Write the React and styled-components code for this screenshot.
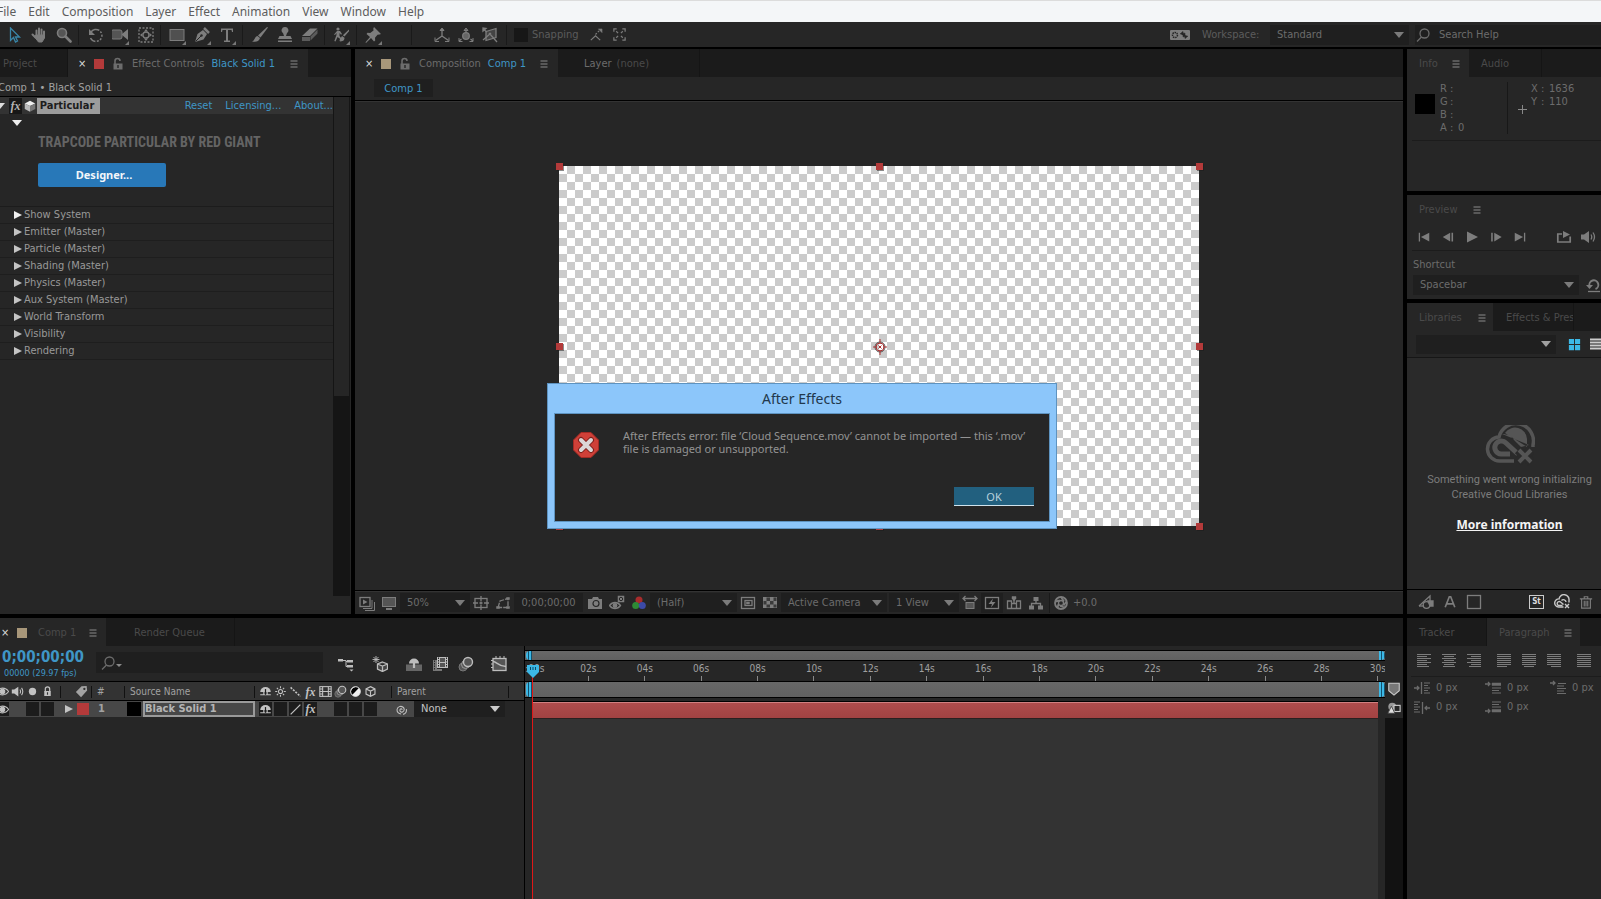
import React, { useState } from "react";
import styled, { createGlobalStyle, css } from "styled-components";

const c = {
  panel: "#262626",
  dark: "#1b1b1b",
  field: "#1f1f1f",
  text: "#6c6c6c",
  dim: "#4a4a4a",
  light: "#a2a2a2",
  blue: "#3f96c6",
  cyan: "#3cb8e6",
  red: "#b33a3a",
  sand: "#a8977a",
};

const GlobalStyle = createGlobalStyle`
  * {
    box-sizing: border-box;
  }
  body {
    margin: 0;
    background: #000;
    color: ${c.text};
    font: 11px/14px "DejaVu Sans Condensed", "Noto Sans", sans-serif;
  }
  button, input, select {
    font: inherit;
    color: inherit;
    margin: 0;
    padding: 0;
    border: 0;
    outline: none;
    background: none;
    min-width: 0;
  }
  h1, h2, p {
    margin: 0;
    font: inherit;
  }
`;

/* ---------- icons ---------- */

const stroke = { fill: "none", stroke: "currentColor", strokeWidth: 1.3 };

const lines = (rows) =>
  rows.map(([x, w], i) => (
    <rect key={i} x={x} y={1 + i * 2} width={w} height="1" fill="currentColor" />
  ));

const icons = {
  arrow: <path d="M4.500 1v12.500l3-3 2 4.500 2-1-2-4H13.500z" {...stroke} />,
  hand: (
    <g stroke="currentColor" strokeWidth="2" strokeLinecap="round">
      <path d="M5.500 9V3.500M8 8V1.500M10.500 8V2.500M13 9V4.500M1.500 7.500l3 3" />
      <path d="M5 8h8.500v3L11 15H7.500L4 10.500z" fill="currentColor" strokeWidth="1" />
    </g>
  ),
  zoom: (
    <g>
      <circle cx="6" cy="6" r="4.500" fill="#555" stroke="currentColor" strokeWidth="1.600" />
      <path d="M9.500 9.500l5 5" stroke="currentColor" strokeWidth="2.600" strokeLinecap="round" />
    </g>
  ),
  rotate: (
    <g>
      <path d="M3 5a6 6 0 1 1-.5 6" {...stroke} strokeDasharray="9 1.500 2 1.500 2 1.500 2 1.500 2 1.500" strokeWidth="1.500" />
      <path d="M1 2v6h6z" fill="currentColor" />
    </g>
  ),
  camera: (
    <g>
      <rect x="-1" y="3" width="11" height="9" rx="2" fill="#555" stroke="currentColor" />
      <path d="M10 7l6-5v11l-6-5z" fill="currentColor" />
    </g>
  ),
  pan: (
    <g>
      <rect x="1" y="1" width="14" height="14" {...stroke} strokeDasharray="2 1.500" />
      <circle cx="8" cy="8" r="3" {...stroke} />
      <path d="M8 2l2 2.500H6zM8 14l2-2.500H6zM2 8l2.500-2v4zM14 8l-2.500-2v4z" fill="currentColor" />
    </g>
  ),
  rect: <rect x="1" y="2.500" width="14" height="11" fill="#505050" stroke="currentColor" />,
  pen: (
    <g>
      <path d="M1 15l2.500-8L9 3l4 4-3.500 5.500z" fill="currentColor" />
      <path d="M10 1l5 5" stroke="currentColor" strokeWidth="2.500" />
      <path d="M1.500 14.500L7 9" stroke="#262626" />
      <circle cx="7.500" cy="8.500" r="1.200" fill="#262626" />
    </g>
  ),
  type: <path d="M2 1.500h12v3.500h-1L12.500 3H9v10.500h2V15H5v-1.500h2V3H3.500L3 5H2z" fill="currentColor" />,
  brush: (
    <g fill="currentColor">
      <path d="M16 .5L8.500 10.500 6 8.500 15 0z" />
      <path d="M5.500 9L8 11c-1 4-4.500 4-8 3.500C3 13.500 2.500 9.500 5.500 9z" />
    </g>
  ),
  stamp: (
    <g fill="currentColor">
      <path d="M8 0a3.300 3.300 0 0 0-2 6l1 3H2.500L1 12h14l-1.500-3H9l1-3a3.300 3.300 0 0 0-2-6z" />
      <rect x="1" y="13.500" width="14" height="1.500" />
    </g>
  ),
  eraser: (
    <g>
      <path d="M0 9L8 1.500h7.500L8 9z" fill="currentColor" />
      <path d="M0 10h8v4H0zM8.500 9.500l7-7V6.500l-7 7z" fill="#5b5b5b" />
    </g>
  ),
  roto: (
    <g fill="currentColor">
      <circle cx="5" cy="2" r="1.600" />
      <path d="M4 4h3l2 3-1 .8L6.500 6v3l2 2.500-1 3-1-.4.500-2.400L4.500 10l-2 4.500-1.200-.5L3.500 8V6L2 8l-1-.6z" />
      <path d="M17 3l-5.500 6.500-1.700-1.200L16 2.500zM9 9l2.500 1.700c0 3-2 3.500-4.500 3.500 1-1 .5-4 2-5.200z" />
    </g>
  ),
  pin: (
    <path d="M9 0l7 7-1.500.5-2 .3-2.500 3 .2 2.700-1.200 1-3-3.500L1 16l-.5-.8L5 10 1.500 7l1-1.200 2.700.2L8.500 3.500 8.300 1.500z" fill="currentColor" />
  ),
  axis: (
    <g {...stroke}>
      <path d="M8 9V2M8 9l-6.500 4.500M8 9l6.500 4.500" />
      <path d="M6 3.500L8 1l2 2.500z" fill="currentColor" strokeWidth="1" />
      <path d="M1 10.500V14.500h4M15 10.500v4h-4" strokeWidth="1" />
    </g>
  ),
  world: (
    <g {...stroke}>
      <path d="M8 6V2M3.500 12L1 14M12.500 12l2.500 2" />
      <circle cx="8" cy="9" r="3.300" fill="#666" />
      <path d="M6 3.500L8 1l2 2.500zM1 11V14.500h3.500M15 11v3.500h-3.500" strokeWidth="1" />
    </g>
  ),
  view: (
    <g {...stroke}>
      <path d="M4 4.500l10-3v9l-10 3z" fill="#444" />
      <path d="M1 2l4 3M7 6l8 9M1 13l8-7" />
      <path d="M1 1v3l3-2.500z" fill="currentColor" />
    </g>
  ),
  snapEdge: (
    <g {...stroke}>
      <path d="M3 14l5-4.500 5 4.500" />
      <path d="M8 8l5-5" strokeDasharray="2 1.500" />
      <path d="M11 2h4v4z" fill="currentColor" strokeWidth=".500" />
    </g>
  ),
  snapBox: (
    <g {...stroke}>
      <path d="M2 5V2h3M11 2h3v3M14 11v3h-3M5 14H2v-3" />
      <path d="M4.500 4.500l2 2M11.500 4.500l-2 2M4.500 11.500l2-2M11.500 11.500l-2-2" />
    </g>
  ),
  workspace: (
    <g>
      <rect x="0" y="3" width="20" height="10" rx="1" fill="currentColor" />
      <circle cx="5" cy="8" r="2.500" fill="none" stroke="#262626" strokeWidth="1.500" strokeDasharray="1.500 .7" />
      <path d="M10 7l3-2.500V6.200h2V9M18 9l-3 2.500V9.800h-2V7.500" fill="#262626" stroke="#262626" strokeWidth=".600" />
    </g>
  ),
  search: (
    <g {...stroke}>
      <circle cx="9.500" cy="6.500" r="4.500" />
      <path d="M6.500 10L2 14.500" />
    </g>
  ),
  lock: (
    <g>
      <path d="M5 8V5a2.500 2.500 0 0 1 5 0" {...stroke} strokeWidth="1.600" />
      <path d="M3.500 7.500h9v6h-9zM7.300 9v3h1.400V9z" fill="currentColor" fillRule="evenodd" />
    </g>
  ),
  closedLock: (
    <g>
      <path d="M5.300 8V5a2.700 2.700 0 0 1 5.400 0v3" {...stroke} strokeWidth="1.500" />
      <path d="M4 7.500h8v6H4zM7.300 9v3h1.400V9z" fill="currentColor" fillRule="evenodd" />
    </g>
  ),
  menu: <path d="M4 4.500h8M4 8h8M4 11.500h8" {...stroke} strokeWidth="1.200" />,
  cube: (
    <g>
      <path d="M8 2l6 3-6 3-6-3z" fill="#eee" />
      <path d="M2 5l6 3v6.500L2 11.500z" fill="#bbb" />
      <path d="M14 5L8 8v6.500l6-3z" fill="#777" />
    </g>
  ),
  cubeLine: (
    <path d="M8 2l5.500 2.800v6.400L8 14 2.500 11.200V4.800zM2.500 4.800L8 7.500l5.500-2.700M8 7.500V14" {...stroke} strokeWidth="1.400" />
  ),
  playStack: (
    <g {...stroke}>
      <path d="M4 13.500h9V5M6 15.500h9.500V7" strokeWidth="1" />
      <rect x="1" y="2.500" width="10" height="9" />
      <path d="M4 4.500v5L8.500 7z" fill="currentColor" stroke="none" />
    </g>
  ),
  monitor: (
    <g>
      <rect x="1.500" y="2.500" width="13" height="9" fill="#555" stroke="currentColor" />
      <path d="M5 14h6" stroke="currentColor" strokeWidth="2" />
    </g>
  ),
  grid: (
    <g {...stroke}>
      <rect x="2" y="3.500" width="12" height="9" />
      <path d="M8 1v5M8 10v5M0 8h5M11 8h5M6.500 8h3M8 6.500v3" />
    </g>
  ),
  mask: (
    <g {...stroke}>
      <path d="M3 12.500L5 6l8-2.500v9z" strokeDasharray="5 1" />
      <path d="M1.500 11.500h3v2h-3zM11.500 2.500h3v2h-3zM11.500 11.500h3v2h-3z" fill="currentColor" strokeWidth=".500" />
    </g>
  ),
  snapshot: (
    <g>
      <path d="M1 4h4l1-2h5l1 2h3v10H1z" fill="currentColor" />
      <circle cx="9" cy="8.500" r="3" fill="none" stroke="#262626" strokeWidth="1.200" />
    </g>
  ),
  showSnap: (
    <g {...stroke}>
      <path d="M.500 10.500c3-4 8-4 11 0-3 4-8 4-11 0z" />
      <circle cx="6" cy="10.500" r="1.800" fill="currentColor" />
      <rect x="9" y="1" width="6" height="6" fill="currentColor" strokeWidth=".500" />
      <circle cx="12" cy="4" r="1.700" stroke="#262626" strokeWidth="1" />
    </g>
  ),
  rgb: (
    <g>
      <circle cx="8" cy="5" r="3.500" fill="#a82c2c" />
      <circle cx="4.700" cy="10.500" r="3.500" fill="#2e8a35" />
      <circle cx="11.300" cy="10.500" r="3.500" fill="#3c4aa8" />
    </g>
  ),
  roi: (
    <g {...stroke}>
      <rect x="1.500" y="2.500" width="13" height="11" />
      <rect x="5" y="5.500" width="7" height="5" />
      <rect x="6.500" y="7" width="3" height="2" fill="currentColor" strokeWidth=".500" />
    </g>
  ),
  checker: (
    <g>
      <rect x="1" y="2" width="14" height="11" fill="currentColor" />
      <path d="M4.500 2.500h3.500v3.500H4.500zM11.500 2.500H14.500V6h-3zM1.500 6h3v3.500h-3zM8 6h3.500v3.500H8zM4.500 9.500H8v3H4.500zM11.500 9.500h3v3h-3z" fill="#3a3a3a" />
    </g>
  ),
  pixelAspect: (
    <g>
      <path d="M1 3.500h14M3.500 1L1 3.500 3.500 6M12.500 1L15 3.500 12.500 6" {...stroke} />
      <rect x="4" y="7.500" width="8" height="6" fill="#555" stroke="currentColor" />
    </g>
  ),
  fast: (
    <g>
      <rect x="1.500" y="2.500" width="13" height="11" {...stroke} />
      <path d="M9 3.500L4.500 9H8l-1 3.500L11.500 7H8z" fill="currentColor" />
    </g>
  ),
  timelineBtn: (
    <g {...stroke}>
      <path d="M1.500 6h4v7.500h-4zM10.500 6h4v7.500h-4zM5.500 8.500h5v5h-5zM8 8V3" />
      <path d="M6 1.500h4v2L8 6 6 3.500z" fill="currentColor" strokeWidth=".500" />
    </g>
  ),
  flow: (
    <g>
      <path d="M5.500 2h5v4h-5zM1 10.500h5v4H1zM10 10.500h5v4h-5z" fill="currentColor" />
      <path d="M8 6v2.500M3.500 11V8.500h9V11" {...stroke} />
    </g>
  ),
  exposure: (
    <g {...stroke}>
      <circle cx="8" cy="8" r="6" strokeWidth="1.800" />
      <circle cx="8" cy="8" r="2.500" fill="#262626" />
      <path d="M8 2l3 4.500M13.500 6.500l-3 4M12 12.500L7 11M4.500 13L5.500 9M2.500 6.500L7 5.500" strokeWidth="1.800" />
    </g>
  ),
  first: <path d="M2 3h1.500v10H2zM14 3v10L4.500 8z" fill="currentColor" />,
  stepBack: <path d="M12 3h1.800v10H12zM10.500 3v10L2 8z" fill="currentColor" />,
  play: <path d="M3 2.500v11L14 8z" fill="currentColor" />,
  stepFwd: <path d="M2.500 3h1.800v10H2.500zM6 3v10l8.500-5z" fill="currentColor" />,
  last: <path d="M12.500 3H14v10h-1.500zM2 3v10l9.500-5z" fill="currentColor" />,
  loop: (
    <g>
      <path d="M6 5H1.800v8h12.400V7.500" {...stroke} strokeWidth="1.700" />
      <path d="M7 2v7l7-3.500z" fill="currentColor" />
    </g>
  ),
  speaker: (
    <g>
      <path d="M1 5.500h3L9 2v12l-5-3.500H1z" fill="currentColor" />
      <path d="M11 5.500q1.500 2.500 0 5M13 3.500q3 4.500 0 9" {...stroke} />
    </g>
  ),
  reset: (
    <g>
      <path d="M4.500 9a4.500 4.500 0 1 1 6 3" {...stroke} strokeWidth="1.900" />
      <path d="M1 8h7l-3.500 4z" fill="currentColor" />
      <path d="M3 14.500h12" {...stroke} />
    </g>
  ),
  tiles: <path d="M2 2h5.500v5.500H2zM8.500 2H14v5.500H8.500zM2 8.500h5.500V14H2zM8.500 8.500H14V14H8.500z" fill="currentColor" />,
  list: <path d="M2 3.500h14M2 6.500h14M2 9.500h14M2 12.500h14" stroke="currentColor" strokeWidth="2" />,
  shapes: (
    <g {...stroke}>
      <path d="M1 12L12 2v6" />
      <path d="M1 12h5" />
      <circle cx="8.500" cy="11" r="3.300" />
      <path d="M10 7h5v5h-3z" fill="currentColor" />
    </g>
  ),
  letterA: <path d="M2.500 14L7.200 2h1.600l4.700 12M4 10.200h8" {...stroke} strokeWidth="1.900" />,
  square: <rect x="1.500" y="1.500" width="13" height="13" {...stroke} />,
  trash: (
    <path d="M1 4.500h14M6 4V2h4v2M3 5v10h10V5M6 6.500V13M8 6.500V13M10 6.500V13" {...stroke} />
  ),
  flowchart: (
    <g fill="currentColor">
      <path d="M0 3h5v2.500H0zM9 4h6v2.500H9zM9 9h6v2.500H9z" />
      <path d="M5 4.500h3v6h2M8 5.500h2" fill="none" stroke="currentColor" />
      <path d="M11.500 13.500h4l-2 2z" />
    </g>
  ),
  draft3d: (
    <g {...stroke}>
      <path d="M10.500 6l5 2v5l-5 2.500-5-2.500V8zM5.500 8l5 2 5-2M10.500 10v5.500" fill="#444" />
      <path d="M4 0v7M.500 3.500h7M1.500 1l5 5M6.500 1l-5 5" strokeWidth=".900" />
    </g>
  ),
  shyBig: (
    <g>
      <path d="M0 8.500h16V15H0z" fill="#666" />
      <path d="M3 7.500a5 5 0 0 1 10 0z" fill="currentColor" />
      <path d="M8 4v8" stroke="currentColor" strokeWidth="2.200" />
    </g>
  ),
  filmBig: (
    <g>
      <path d="M1 4h9v11H1z" fill="#777" />
      <path d="M5 1h11v11H5z" fill="currentColor" />
      <path d="M8 2h5v4H8zM8 7h5v4H8z" fill="#555" />
      <path d="M6.500 1.500v10M14.500 1.500v10M2.500 4.500v10" stroke="#262626" strokeDasharray="1.500 1" />
      <path d="M5 12.500h6" stroke="#262626" />
    </g>
  ),
  film: (
    <g {...stroke}>
      <rect x="1" y="2" width="14" height="12" />
      <path d="M4.500 2v12M11.500 2v12M4.500 8h7M1 5h3M1 8h3M1 11h3M12 5h3M12 8h3M12 11h3" />
    </g>
  ),
  blur: (
    <g>
      <circle cx="5" cy="11" r="4" fill="#555" stroke="#777" />
      <circle cx="7.500" cy="8.500" r="4" fill="#555" stroke="#999" />
      <circle cx="10" cy="6" r="4.500" fill="#555" stroke="currentColor" strokeWidth="1.400" />
    </g>
  ),
  graph: (
    <g {...stroke}>
      <rect x="2" y="2.500" width="13" height="12" fill="#555" />
      <path d="M2 5.500c4 0 5 5 13 5" />
      <path d="M0 4.500h2M0 8h2M0 11.500h2M5 0v2M9 0v2M13 0v2" strokeWidth="1" />
    </g>
  ),
  eye: (
    <g {...stroke}>
      <path d="M.500 8C4 2.500 12 2.500 15.500 8 12 13.500 4 13.500.500 8z" />
      <circle cx="8" cy="8" r="2.800" fill="currentColor" />
    </g>
  ),
  dot: <circle cx="8" cy="8" r="4.500" fill="currentColor" />,
  tag: <path d="M2 8.500L8 2.500 13.500 2l.500 5-6.500 7zM11 4a1.200 1.200 0 1 0 .1 0z" fill="currentColor" fillRule="evenodd" />,
  shy: (
    <g>
      <path d="M1.500 8.500a6.500 6 0 0 1 13 0z" fill="currentColor" />
      <path d="M6 8.500v3M10 8.500v3M1.500 12h13" {...stroke} strokeWidth="1.500" />
      <path d="M8 5v7" stroke="#1c1c1c" strokeWidth="1.500" />
    </g>
  ),
  sun: (
    <g {...stroke}>
      <circle cx="8" cy="8" r="2.500" />
      <path d="M8 1.500v2.500M8 12v2.500M1.500 8H4M12 8h2.500M3.500 3.500L5 5M11 11l1.500 1.500M3.500 12.500L5 11M11 5l1.500-1.500" />
    </g>
  ),
  quality: <path d="M2 3L14 14" {...stroke} strokeWidth="2" strokeDasharray="2.500 1.500" />,
  slash: <path d="M2 14L14 2" {...stroke} strokeWidth="1.600" />,
  half: (
    <g>
      <circle cx="8" cy="8" r="6" fill="#eee" />
      <path d="M3.800 12.200a6 6 0 0 1 8.400-8.400z" fill="#000" />
      <circle cx="8" cy="8" r="6" fill="none" stroke="#eee" />
    </g>
  ),
  whip: (
    <path d="M8.500 8.500c.5-1.500-1.500-2-2.300-.5-.8 2 1 3.800 3 3 2.600-1 2.800-4.200.8-5.800C7 3 3 4.500 2.500 8c-.3 3 2 5.500 5 5.500M10 14c2.800-.8 4.500-3.500 4-6.500" {...stroke} />
  ),
  marker: <path d="M2 1.500h12v8.500l-6 5-6-5z" fill="#777" stroke="#ccc" strokeWidth="1.200" />,
  compBtn: (
    <g>
      <circle cx="6" cy="6.500" r="4.500" fill="#999" />
      <rect x="8" y="5" width="7" height="7" fill="#262626" stroke="#ccc" strokeWidth="1.300" />
      <path d="M1 14L5 6l4 8z" fill="#ddd" stroke="#444" />
    </g>
  ),
  alignL: <g>{lines([[1, 14], [1, 10], [1, 14], [1, 10], [1, 14], [1, 10], [1, 12]])}</g>,
  alignC: <g>{lines([[1, 14], [3, 10], [1, 14], [3, 10], [1, 14], [3, 10], [2, 12]])}</g>,
  alignR: <g>{lines([[1, 14], [5, 10], [1, 14], [5, 10], [1, 14], [5, 10], [3, 12]])}</g>,
  justL: <g>{lines([[1, 14], [1, 14], [1, 14], [1, 14], [1, 14], [1, 14], [1, 10]])}</g>,
  justC: <g>{lines([[1, 14], [1, 14], [1, 14], [1, 14], [1, 14], [1, 14], [3, 10]])}</g>,
  justR: <g>{lines([[1, 14], [1, 14], [1, 14], [1, 14], [1, 14], [1, 14], [5, 10]])}</g>,
  justA: <g>{lines([[1, 14], [1, 14], [1, 14], [1, 14], [1, 14], [1, 14], [1, 14]])}</g>,
  indentL: (
    <g {...stroke}>
      <path d="M0 8h5M3 6l2 2-2 2M7.500 2v12" />
      <path d="M10 3h6M10 5.500h4M10 8h6M10 10.500h4M10 13h6" strokeWidth="1" />
    </g>
  ),
  indentR: (
    <g {...stroke}>
      <path d="M16 9h-5M13 7l-2 2 2 2M8.500 3v12" />
      <path d="M0 3h6M0 5.500h4M0 8h6M0 10.500h4M0 13h6" strokeWidth="1" />
    </g>
  ),
  spaceBefore: (
    <g {...stroke}>
      <path d="M0 4h5M3 2l2 2-2 2" />
      <path d="M7 3h9v2.500H7z" fill="currentColor" strokeWidth=".500" />
      <path d="M7 8h9M7 10.500h7M7 13h9" strokeWidth="1" />
    </g>
  ),
  spaceAfter: (
    <g {...stroke}>
      <path d="M0 12h5M3 10l2 2-2 2" />
      <path d="M7 10.500h9V13H7z" fill="currentColor" strokeWidth=".500" />
      <path d="M7 3h9M7 5.500h7M7 8h9" strokeWidth="1" />
    </g>
  ),
  indentFirst: (
    <g {...stroke}>
      <path d="M0 3h5M3 1l2 2-2 2" />
      <path d="M8 3.500h8M7 6h7M7 8.500h9M7 11h7M7 13.500h9" strokeWidth="1" />
    </g>
  ),
  ccError: (
    <g {...stroke} strokeWidth="1.400">
      <path d="M9.500 13H4.500A4 4 0 0 1 5 4.900 4.800 4.800 0 0 1 15 6.500v2" />
      <path d="M8.500 11.500H5A2 2 0 1 1 6.500 8L9.500 10.500M7.500 6.500a2.600 2.600 0 0 1 4.500 1.500M11 10l4 4M15 10l-4 4" />
    </g>
  ),
};

const Svg = styled.svg`
  display: block;
  flex: none;
`;

const Icon = ({ name, size = 16, width }) => (
  <Svg
    width={width || size}
    height={size}
    viewBox={width ? `0 0 ${width} ${size}` : "0 0 16 16"}
    aria-hidden="true"
  >
    {icons[name]}
  </Svg>
);

const Triangle = styled.span`
  flex: none;
  width: 0;
  height: 0;
  border: solid transparent;
  border-width: ${(p) => (p.$down ? "6px 5px 0" : "4px 0 4px 8px")};
  ${(p) =>
    p.$down
      ? `border-top-color: ${p.$color || "#7b7b7b"};`
      : `border-left-color: ${p.$color || "#c4c4c4"};`}
`;

/* ---------- shared parts ---------- */

const Page = styled.div`
  display: flex;
  flex-direction: column;
  height: 100vh;
  overflow: hidden;
`;

const IconButton = styled.button`
  flex: none;
  display: flex;
  align-items: center;
  justify-content: center;
  width: ${(p) => p.$w || 22}px;
  height: 20px;
  color: ${(p) => p.$color || "#7d7d7d"};
  background: ${(p) => p.$bg || "none"};
`;

const Corner = styled.i`
  align-self: flex-end;
  width: 0;
  height: 0;
  margin-left: -3px;
  border: solid transparent;
  border-width: 0 0 4px 4px;
  border-bottom-color: #777;
`;

const SelectBox = styled.label`
  flex: ${(p) => (p.$w ? `0 0 ${p.$w}px` : "1")};
  display: flex;
  align-items: center;
  height: ${(p) => p.$h || 19}px;
  padding: 0 5px 0 ${(p) => p.$pad ?? 7}px;
  background: ${c.field};
  color: ${(p) => p.$color || c.text};
  min-width: 0;

  select {
    flex: 1;
    appearance: none;
  }
`;

const Select = ({ label, options, arrow, ...rest }) => (
  <SelectBox {...rest}>
    <select aria-label={label}>
      {options.map((o) => (
        <option key={o}>{o}</option>
      ))}
    </select>
    <Triangle $down $color={arrow} />
  </SelectBox>
);

const Panel = styled.section`
  display: flex;
  flex-direction: column;
  min-width: 0;
  min-height: 0;
  overflow: hidden;
  background: ${c.panel};
  ${(p) => p.$grow && "flex: 1;"}
  ${(p) => p.$h && `flex: 0 0 ${p.$h}px;`}
`;

const Tabs = styled.div`
  flex: none;
  display: flex;
  height: 28px;
  background: ${(p) => (p.$plain ? c.panel : c.dark)};
`;

const Tab = styled.button`
  flex: 0 0 ${(p) => p.$w}px;
  display: flex;
  align-items: center;
  height: 28px;
  padding: 2px 0 0 ${(p) => p.$pad ?? 12}px;
  color: ${(p) => p.$color || c.dim};
  text-align: left;
  white-space: nowrap;
  overflow: hidden;
  ${(p) => (p.$active ? `background: ${c.panel};` : "border-right: 1px solid #151515;")}

  svg:last-child {
    margin-left: ${(p) => p.$menuGap || 11}px;
    color: #8a8a8a;
  }
`;

const Close = styled.span`
  width: 16px;
  color: #ddd;
`;

const Swatch = styled.span`
  flex: none;
  width: ${(p) => p.$size || 10}px;
  height: ${(p) => p.$size || 10}px;
  background: ${(p) => p.$color};
`;

const Blue = styled.span`
  color: ${c.blue};
  margin-left: 7px;
`;

/* ---------- menu and toolbar ---------- */

const MenuBar = styled.nav`
  flex: none;
  display: flex;
  gap: 12px;
  height: 22px;
  padding-top: 1px;
  overflow: hidden;
  border-top: 1px solid #dcdcdc;
  background: #f4f6f8;
  color: #5d5d5d;
  font: 12px/18px "Noto Sans", sans-serif;

  button:first-child {
    margin-left: -3px;
  }
`;

const ToolBar = styled.div`
  flex: none;
  display: flex;
  align-items: center;
  height: 25px;
  margin-bottom: 2px;
  padding-left: 1px;
  background: ${c.panel};
`;

const Separator = styled.span`
  flex: none;
  width: 1px;
  height: 20px;
  margin: 0 4px 0 2px;
  background: #1a1a1a;
`;

const Space = styled.span`
  flex: ${(p) => (p.$w ? `0 0 ${p.$w}px` : "1")};
`;

const CheckLabel = styled.label`
  display: flex;
  align-items: center;
  gap: 4px;
  width: 73px;
  color: #5c5c5c;

  input {
    appearance: none;
    width: 14px;
    height: 14px;
    background: #171717;
  }
`;

const SearchBox = styled.label`
  display: flex;
  align-items: center;
  flex: 0 0 ${(p) => p.$w}px;
  gap: ${(p) => p.$gap || 0}px;
  height: ${(p) => p.$h}px;
  padding-left: ${(p) => p.$pad || 0}px;
  background: ${c.field};

  input {
    flex: 1;
    width: 20px;
  }
  input::placeholder {
    color: ${c.text};
    opacity: 1;
  }
`;

const WorkspaceLabel = styled.span`
  width: 68px;
  margin-left: 12px;
  color: #5c5c5c;
`;

/* ---------- workspace ---------- */

const Work = styled.main`
  flex: 1;
  min-height: 0;
  display: grid;
  grid-template-columns: minmax(0, 1fr) 194px;
  grid-template-rows: minmax(0, 1fr) 281px;
  gap: 4px;
`;

const Upper = styled.div`
  display: grid;
  grid-template-columns: 351px minmax(0, 1fr);
  gap: 4px;
  min-height: 0;
`;

const Side = styled.aside`
  display: flex;
  flex-direction: column;
  gap: 4px;
  min-height: 0;
`;

const EffectPath = styled.div`
  flex: none;
  height: 20px;
  padding-top: 4px;
  margin-left: -2px;
  color: ${c.light};
  border-bottom: 1px solid #000;
`;

const EffectBody = styled.div`
  flex: 1;
  display: flex;
  min-height: 0;
  padding-bottom: 18px;
`;

const EffectList = styled.div`
  flex: 1;
  min-width: 0;
`;

const ScrollTrack = styled.div`
  width: 17px;
  margin-right: 1px;
  border-left: 1px solid #151515;
  background: #151515;
`;

const ScrollThumb = styled.div`
  height: 60%;
  border-right: 1px solid #151515;
  background: ${c.panel};
`;

const EffectHead = styled.div`
  display: flex;
  align-items: center;
  height: 17px;
  background: #333;
  overflow: hidden;

  > :first-child {
    margin-left: -5px;
  }
`;

const Fx = styled.i`
  font: italic bold 12px/16px "Liberation Serif", serif;
  color: ${(p) => p.$color || "#b4b4b4"};
`;

const FxBox = styled.button`
  width: 13px;
  height: 16px;
  margin: 0 1px 0 4px;
  background: #171717;
`;

const EffectName = styled.h2`
  width: 64px;
  height: 16px;
  padding-left: 3px;
  background: #9c9c9c;
  color: #1d1d1d;
  font-weight: bold;
  line-height: 16px;
`;

const TextLink = styled.a`
  color: ${c.blue};
  text-decoration: none;
  white-space: nowrap;
`;

const EffectLinks = styled.div`
  display: flex;
  gap: 13px;
  margin-left: 85px;
`;

const Plugin = styled.div`
  height: 93px;
  padding: 6px 0 0 12px;
  border-bottom: 1px solid #1c1c1c;
`;

const PluginTitle = styled.p`
  padding: 7px 0 0 26px;
  color: #646464;
  font: bold 14px/18px "Liberation Sans Narrow", "Roboto Condensed", "Liberation Sans", sans-serif;
  text-transform: uppercase;
  white-space: nowrap;
`;

const DesignerButton = styled.button`
  display: block;
  width: 128px;
  height: 24px;
  margin: 12px 0 0 26px;
  padding-left: 4px;
  border-radius: 2px;
  background: #2878b8;
  color: #f2f6fa;
  font: bold 11px/14px "Noto Sans", sans-serif;
`;

const Twirl = styled.button`
  display: flex;
`;

const PropertyRow = styled.div`
  display: flex;
  align-items: center;
  gap: 2px;
  height: 17px;
  padding-left: 14px;
  border-bottom: 1px solid #1e1e1e;
  color: #999;
`;

/* ---------- composition ---------- */

const Dimmed = styled.span`
  color: ${c.dim};
  margin-left: 5px;
`;

const Crumbs = styled.div`
  flex: none;
  height: 24px;
  padding: 2px 0 0 19px;
  border-bottom: 1px solid #000;
  box-shadow: 0 1px #333;
`;

const Crumb = styled.button`
  height: 18px;
  width: 59px;
  padding-top: 1px;
  background: #1f1f1f;
  color: ${c.blue};
`;

const Stage = styled.div`
  flex: 1;
  min-height: 0;
  display: flex;
  align-items: center;
  justify-content: center;
`;

const Canvas = styled.div`
  position: relative;
  width: 640px;
  height: 360px;
  background: repeating-conic-gradient(#cbcbcb 0 25%, #fff 0 50%) 0 0 / 16px 16px;
`;

const Handle = styled.i`
  position: absolute;
  left: ${(p) => p.$x}%;
  top: ${(p) => p.$y}%;
  width: 7px;
  height: 7px;
  margin: -3px;
  background: ${c.red};
  box-shadow: 1px 1px #1a1a1a80;
`;

const Anchor = styled.svg`
  position: absolute;
  left: 50%;
  top: 50%;
  margin: -7px;
`;

const ViewBar = styled.div`
  flex: none;
  display: flex;
  align-items: center;
  height: 24px;
  padding-left: 1px;
  border-top: 1px solid #000;
  box-shadow: inset 0 1px #333;
`;

const TimeField = styled.button`
  width: 69px;
  height: 19px;
  margin: 0 1px 0 0;
  background: ${c.field};
`;

/* ---------- side panels ---------- */

const InfoGrid = styled.div`
  display: grid;
  grid-template-columns: 20px 68px 13px 1fr;
  column-gap: 5px;
  margin: 0 0 0 5px;
  padding: 5px 0 6px 3px;
  border-bottom: 1px solid #1c1c1c;
  line-height: 13px;

  > :first-child {
    margin-top: 12px;
  }
`;

const Channels = styled.div`
  display: grid;
  grid-template-columns: 10px 8px auto;
  align-content: start;
  justify-content: start;
  border-right: ${(p) => (p.$line ? "1px solid #181818" : "0")};

  b {
    font-weight: normal;
  }
`;

const Cross = styled.svg`
  margin: 22px 0 0 4px;
`;

const Transport = styled.div`
  flex: none;
  display: flex;
  align-items: center;
  height: 28px;
  margin-left: 5px;
  border-bottom: 1px solid #1c1c1c;
`;

const ShortcutArea = styled.div`
  padding: 7px 0 0 6px;
`;

const FieldRow = styled.div`
  display: flex;
  align-items: center;
  margin-top: 3px;
`;

const LibraryBar = styled.div`
  flex: none;
  display: flex;
  align-items: center;
  height: 27px;
  padding: 0 0 0 9px;
  border-bottom: 1px solid #161616;
`;

const LibraryBody = styled.div`
  flex: 1;
  min-height: 0;
  display: flex;
  flex-direction: column;
  align-items: center;
  padding: 67px 0 0 11px;
  background: #2a2a2a;
  color: #7c7c7c;
  font: 11px/15px Roboto, sans-serif;
  text-align: center;
  white-space: nowrap;
`;

const LibraryMessage = styled.p`
  margin-top: 5px;
`;

const MoreLink = styled.a`
  margin-top: 15px;
  color: #f4f4f4;
  font: bold 12px/16px "Noto Sans", sans-serif;
`;

const LibraryFoot = styled.div`
  flex: none;
  display: flex;
  align-items: center;
  height: 25px;
  padding-left: 7px;
  border-top: 1px solid #000;
`;

const StockButton = styled.button`
  width: 15px;
  height: 14px;
  margin-right: 6px;
  border: 1px solid #ccc;
  color: #ddd;
  font: bold 8px/10px "DejaVu Sans Condensed", sans-serif;
`;

const AlignRow = styled.div`
  display: flex;
  height: 31px;
  align-items: center;
  margin: 0 0 0 4px;
  border-bottom: 1px solid #1c1c1c;

  button:nth-child(4),
  button:nth-child(7) {
    margin-left: 5px;
  }
`;

const IndentGrid = styled.div`
  display: grid;
  grid-template-columns: 71px 65px 1fr;
  row-gap: 3px;
  padding: 3px 0 0 7px;
`;

const Indent = styled.label`
  display: flex;
  align-items: center;
  gap: 6px;
  height: 16px;

  input {
    width: 28px;
  }
`;

/* ---------- timeline ---------- */

const TimelineBody = styled.div`
  flex: 1;
  min-height: 0;
  display: grid;
  grid-template-columns: 525px minmax(0, 1fr) 18px;
`;

const Layers = styled.div`
  border-right: 1px solid #000;
  min-width: 0;
`;

const LayerTools = styled.div`
  display: flex;
  height: 36px;
  border-bottom: 1px solid #000;

  > label {
    margin-top: 6px;
  }
`;

const Caret = styled.i`
  border: solid transparent;
  border-width: 3px 3px 0;
  border-top-color: #8a8a8a;
  margin-top: 6px;
`;

const Clock = styled.div`
  width: 96px;
  padding-left: 2px;
  color: ${c.blue};
  white-space: nowrap;

  strong {
    display: block;
    font: bold 15px/18px "DejaVu Sans Condensed", sans-serif;
    margin-top: 2px;
  }
  span {
    display: block;
    padding-left: 2px;
    font-size: 9px;
    line-height: 14px;
  }
`;

const ToolIcons = styled.div`
  display: flex;
  align-items: center;
  margin-left: 6px;

  button:nth-child(3) {
    margin-left: 4px;
  }
  button:last-child {
    margin-left: 7px;
  }
`;

const LayerTable = styled.table`
  width: 100%;
  table-layout: fixed;
  border-spacing: 0;
  color: ${c.light};

  th,
  td {
    padding: 0;
    font-weight: normal;
    text-align: left;
    overflow: hidden;
  }
  th {
    height: 19px;
    padding-top: 1px;
    background: #333;
    border-bottom: 1px solid #000;
    font-size: 10px;
  }
  td {
    height: 16px;
    background: #474747;
  }
  td:last-child {
    background: linear-gradient(90deg, #474747 113px, ${c.panel} 0);
  }
`;

const Cells = styled.div`
  display: flex;
  align-items: center;
  margin-left: ${(p) => p.$shift || 0}px;
`;

const HeadCell = styled.div`
  display: flex;
  align-items: center;
  height: 12px;
  padding-left: ${(p) => p.$pad || 0}px;
  border-right: 1px solid #111;
  margin-right: ${(p) => p.$end || 0}px;
`;

const Cell = styled.button`
  flex: none;
  display: flex;
  align-items: center;
  justify-content: center;
  width: 13px;
  height: 14px;
  margin: 0 1px;
  color: #c2c2c2;
  ${(p) => p.$box && css`background: #1c1c1c;`}
`;

const LayerName = styled.button`
  flex: 1;
  height: 16px;
  margin-left: 2px;
  border: 2px solid #9a9a9a;
  color: #b4b4b4;
  font-weight: bold;
  line-height: 12px;
  text-align: left;
`;

const TimeArea = styled.div`
  position: relative;
  display: flex;
  flex-direction: column;
  min-width: 0;
`;

const RangeBar = styled.div`
  flex: none;
  display: flex;
  justify-content: space-between;
  height: ${(p) => p.$h}px;
  margin-top: ${(p) => p.$top || 0}px;
  padding-left: 1px;
  border: solid #000;
  border-width: 1px 0;
  background: linear-gradient(#686868, #606060);
`;

const Grip = styled.button`
  width: 6px;
  border-radius: ${(p) => (p.$end ? "0 4px 4px 0" : "4px 0 0 4px")};
  background: repeating-linear-gradient(90deg, ${c.cyan} 0 2px, #14506c 2px 3px);
`;

const Ruler = styled.div`
  flex: none;
  display: flex;
  justify-content: space-between;
  height: 20px;
  padding: 1px 7px 0;
  overflow: hidden;
`;

const Tick = styled.span`
  display: flex;
  flex-direction: column;
  align-items: center;
  width: 0;
  color: #a0a0a0;
  font-size: 10px;
  line-height: 13px;
  white-space: nowrap;

  &::after {
    content: "";
    width: 1px;
    height: 5px;
    margin-top: 1px;
    background: #888;
  }
`;

const Track = styled.div`
  flex: 1;
  margin: 3px 7px 0;
  border-top: 1px solid #000;
  background: #333;
`;

const LayerBar = styled.div`
  height: 17px;
  border-top: 1px solid #d08080;
  border-bottom: 1px solid #2a2020;
  background: linear-gradient(#ae4c4c, #a24242);
`;

const Playhead = styled.div`
  position: absolute;
  left: 7px;
  top: 19px;
  bottom: 0;
  width: 1px;
  background: #e01818;

  svg {
    display: block;
    margin-left: -5px;
  }
`;

const Gutter = styled.div`
  display: flex;
  flex-direction: column;
  align-items: center;
  gap: 5px;
  padding-top: 36px;
  background: linear-gradient(${c.panel} 72px, #121212 0);
`;

/* ---------- error dialog ---------- */

const Dialog = styled.div`
  position: fixed;
  left: 547px;
  top: 383px;
  width: 510px;
  padding: 0 6px 6px;
  border: 1px solid #5e93c0;
  background: #8cc6fa;
`;

const DialogTitle = styled.h1`
  height: 29px;
  color: #22384c;
  font: 14px/29px "Noto Sans", sans-serif;
  text-align: center;
`;

const DialogBody = styled.div`
  display: grid;
  grid-template-columns: 26px 1fr;
  column-gap: 24px;
  padding: 15px 15px 15px 18px;
  border: 1px solid #5e93c0;
  background: ${c.panel};
  color: #939393;
  font: 11px/13px "Noto Sans", sans-serif;
  white-space: pre-line;

  p {
    height: 58px;
  }
  svg {
    margin-top: 3px;
  }
`;

const OkButton = styled.button`
  grid-column: 2;
  justify-self: end;
  width: 80px;
  height: 19px;
  border-bottom: 1px solid #cfe2ec;
  background: #22607f;
  color: #b9d2de;
`;

const menus = ["File", "Edit", "Composition", "Layer", "Effect", "Animation", "View", "Window", "Help"];

const toolGroups = [
  ["arrow", "hand", "zoom"],
  ["rotate", "camera", "pan"],
  ["rect", "pen", "type"],
  ["brush", "stamp", "eraser"],
  ["roto"],
  ["pin"],
];

const withCorner = ["camera", "rect", "pen", "type", "roto", "pin"];

const properties = [
  "Show System",
  "Emitter (Master)",
  "Particle (Master)",
  "Shading (Master)",
  "Physics (Master)",
  "Aux System (Master)",
  "World Transform",
  "Visibility",
  "Rendering",
];

const handles = [[0, 0], [50, 0], [100, 0], [0, 50], [100, 50], [0, 100], [50, 100], [100, 100]];

const indents = [
  ["indentL", "Indent left margin"],
  ["spaceBefore", "Space before paragraph"],
  ["indentFirst", "Indent first line"],
  ["indentR", "Indent right margin"],
  ["spaceAfter", "Space after paragraph"],
];

const seconds = Array.from({ length: 16 }, (_, i) => String(i * 2).padStart(2, "0") + "s");

const Tools = () => (
  <ToolBar>
    {toolGroups.map((group, i) => (
      <React.Fragment key={i}>
        {i > 0 && <Separator />}
        {group.map((name) => (
          <IconButton key={name} $w={25} aria-label={name} $color={name === "arrow" ? "#3a86a8" : undefined}>
            <Icon name={name} />
            {withCorner.includes(name) && <Corner />}
          </IconButton>
        ))}
      </React.Fragment>
    ))}
    <Space $w={23} />
    <Separator />
    <Space $w={14} />
    {["axis", "world", "view"].map((name) => (
      <IconButton key={name} $w={24} aria-label={name}>
        <Icon name={name} />
      </IconButton>
    ))}
    <Space $w={2} />
    <Separator />
    <Space $w={3} />
    <CheckLabel>
      <input type="checkbox" />
      Snapping
    </CheckLabel>
    <IconButton $w={16} aria-label="Snap edges">
      <Icon name="snapEdge" size={15} />
    </IconButton>
    <IconButton $w={32} aria-label="Snap features">
      <Icon name="snapBox" size={15} />
    </IconButton>
    <Space />
    <IconButton $w={20} aria-label="Sync settings">
      <Icon name="workspace" width={20} />
    </IconButton>
    <WorkspaceLabel>Workspace:</WorkspaceLabel>
    <Select label="Workspace" options={["Standard"]} $w={139} $h={20} />
    <Space $w={6} />
    <SearchBox $h={20} $w={186} $gap={8}>
      <Icon name="search" />
      <input placeholder="Search Help" aria-label="Search Help" />
    </SearchBox>
  </ToolBar>
);

const EffectControls = () => (
  <Panel>
    <Tabs>
      <Tab $w={68} $pad={3}>Project</Tab>
      <Tab $w={240} $active $pad={10} $color={c.text} $menuGap={12}>
        <Close>×</Close>
        <Swatch $color={c.red} />
        <Space $w={6} />
        <Icon name="lock" />
        <Space $w={6} />
        Effect Controls <Blue>Black Solid 1</Blue>
        <Icon name="menu" size={14} />
      </Tab>
    </Tabs>
    <EffectPath>Comp 1 • Black Solid 1</EffectPath>
    <EffectBody>
      <EffectList>
        <EffectHead>
          <Triangle $down $color="#ddd" />
          <FxBox aria-label="Toggle effect">
            <Fx>fx</Fx>
          </FxBox>
          <Icon name="cube" size={14} />
          <EffectName>Particular</EffectName>
          <EffectLinks>
            <TextLink href="#reset">Reset</TextLink>
            <TextLink href="#licensing">Licensing...</TextLink>
            <TextLink href="#about">About...</TextLink>
          </EffectLinks>
        </EffectHead>
        <Plugin>
          <Twirl aria-label="Collapse">
            <Triangle $down $color="#eee" />
          </Twirl>
          <PluginTitle>Trapcode Particular by Red Giant</PluginTitle>
          <DesignerButton>Designer...</DesignerButton>
        </Plugin>
        {properties.map((name, i) => (
          <PropertyRow key={name}>
            <Twirl aria-label={`Expand ${name}`}>
              <Triangle $color={i === 0 ? "#f0f0f0" : undefined} />
            </Twirl>
            {name}
          </PropertyRow>
        ))}
      </EffectList>
      <ScrollTrack>
        <ScrollThumb />
      </ScrollTrack>
    </EffectBody>
  </Panel>
);

const Composition = () => (
  <Panel>
    <Tabs>
      <Tab $w={203} $active $pad={10} $color={c.text}>
        <Close>×</Close>
        <Swatch $color={c.sand} />
        <Space $w={6} />
        <Icon name="lock" />
        <Space $w={6} />
        Composition <Blue>Comp 1</Blue>
        <Icon name="menu" size={14} />
      </Tab>
      <Tab $w={142} $pad={26} $color={c.text}>
        Layer <Dimmed>(none)</Dimmed>
      </Tab>
    </Tabs>
    <Crumbs>
      <Crumb>Comp 1</Crumb>
    </Crumbs>
    <Stage>
      <Canvas>
        {handles.map(([x, y]) => (
          <Handle key={`${x}-${y}`} $x={x} $y={y} />
        ))}
        <Anchor width="16" height="16" viewBox="0 0 16 16" fill="none" stroke="#a33">
          <circle cx="8" cy="8" r="5" stroke="#555" />
          <circle cx="8" cy="8" r="4" />
          <path d="M8 0v5M8 11v5M1 8h4M11 8h4M6.500 6.500l3 3M9.500 6.500l-3 3" />
        </Anchor>
      </Canvas>
    </Stage>
    <ViewBar>
      <IconButton aria-label="Preview always">
        <Icon name="playStack" />
      </IconButton>
      <IconButton aria-label="Primary viewer">
        <Icon name="monitor" />
      </IconButton>
      <Select label="Magnification" options={["50%"]} $w={70} />
      <IconButton aria-label="Grid and guides">
        <Icon name="grid" />
      </IconButton>
      <IconButton aria-label="Mask visibility">
        <Icon name="mask" />
      </IconButton>
      <TimeField>0;00;00;00</TimeField>
      <IconButton aria-label="Take snapshot">
        <Icon name="snapshot" />
      </IconButton>
      <IconButton aria-label="Show snapshot">
        <Icon name="showSnap" />
      </IconButton>
      <IconButton aria-label="Channels">
        <Icon name="rgb" />
      </IconButton>
      <Select label="Resolution" options={["(Half)"]} $w={87} />
      <IconButton aria-label="Region of interest">
        <Icon name="roi" />
      </IconButton>
      <IconButton aria-label="Transparency grid">
        <Icon name="checker" />
      </IconButton>
      <Select label="3D view" options={["Active Camera"]} $w={106} />
      <Space $w={2} />
      <Select label="View layout" options={["1 View"]} $w={70} />
      <IconButton aria-label="Pixel aspect ratio">
        <Icon name="pixelAspect" />
      </IconButton>
      <IconButton aria-label="Fast previews" $bg={c.field}>
        <Icon name="fast" />
      </IconButton>
      <IconButton aria-label="Timeline">
        <Icon name="timelineBtn" />
      </IconButton>
      <IconButton aria-label="Flowchart">
        <Icon name="flow" />
      </IconButton>
      <Separator />
      <IconButton $w={13} aria-label="Reset exposure">
        <Icon name="exposure" />
      </IconButton>
      <Space $w={6} />
      <span>+0.0</span>
    </ViewBar>
  </Panel>
);

const Info = () => (
  <Panel $h={142}>
    <Tabs>
      <Tab $w={62} $active>
        Info
        <Icon name="menu" size={14} />
      </Tab>
      <Tab $w={73}>Audio</Tab>
    </Tabs>
    <InfoGrid>
      <Swatch $size={20} $color="#000" />
      <Channels $line>
        <b>R</b>:<span />
        <b>G</b>:<span />
        <b>B</b>:<span />
        <b>A</b>:<span>0</span>
      </Channels>
      <Cross width="11" height="11" stroke="#888">
        <path d="M5.500 1v9M1 5.500h9" />
      </Cross>
      <Channels>
        <b>X</b>:<span>1636</span>
        <b>Y</b>:<span>110</span>
      </Channels>
    </InfoGrid>
  </Panel>
);

const Preview = () => (
  <Panel $h={104}>
    <Tabs $plain>
      <Tab $w={80} $active $menuGap={13}>
        Preview
        <Icon name="menu" size={14} />
      </Tab>
    </Tabs>
    <Transport>
      {["first", "stepBack", "play", "stepFwd", "last"].map((name) => (
        <IconButton key={name} $w={24} aria-label={name}>
          <Icon name={name} size={name === "play" ? 16 : 14} />
        </IconButton>
      ))}
      <Space $w={20} />
      <IconButton $w={24} aria-label="Loop">
        <Icon name="loop" />
      </IconButton>
      <IconButton $w={24} aria-label="Mute">
        <Icon name="speaker" />
      </IconButton>
    </Transport>
    <ShortcutArea>
      <span>Shortcut</span>
      <FieldRow>
        <Select label="Shortcut" options={["Spacebar"]} $w={166} $h={20} />
        <Space $w={6} />
        <IconButton $w={16} aria-label="Reset">
          <Icon name="reset" />
        </IconButton>
      </FieldRow>
    </ShortcutArea>
  </Panel>
);

const Libraries = () => (
  <Panel $grow>
    <Tabs>
      <Tab $w={86} $active $menuGap={13}>
        Libraries
        <Icon name="menu" size={14} />
      </Tab>
      <Tab $w={81} $pad={13}>Effects &amp; Presets</Tab>
    </Tabs>
    <LibraryBar>
      <Select label="Library" options={[""]} $w={140} arrow="#a0a0a0" />
      <Space $w={8} />
      <IconButton $w={20} aria-label="Grid view" $color={c.cyan}>
        <Icon name="tiles" size={15} />
      </IconButton>
      <IconButton $w={24} aria-label="List view" $color="#ccc">
        <Icon name="list" />
      </IconButton>
    </LibraryBar>
    <LibraryBody>
      <svg width="50" height="42" viewBox="0 0 50 42" fill="none" stroke="#555" strokeWidth="4" aria-hidden="true">
        <path d="M29 36H15A12 12 0 0 1 14 12 17 17 0 0 1 48 20v2" strokeWidth="3.500" />
        <path d="M17 9c6 0 9 2 12 6l7 7 8-2M20 8a12 12 0 0 1 22 6v8" fill="#555" stroke="none" />
        <path d="M25 29h-9a6.500 6.500 0 1 1 5-11l12 11" strokeWidth="5" />
        <path d="M33 25l13 12M46 25L33 37" strokeWidth="9" stroke="#2a2a2a" />
        <path d="M34 25l12 12M46 25L34 37" />
      </svg>
      <LibraryMessage>
        Something went wrong initializing
        <br />
        Creative Cloud Libraries
      </LibraryMessage>
      <MoreLink href="#more">More information</MoreLink>
    </LibraryBody>
    <LibraryFoot>
      <IconButton $w={24} aria-label="Add graphic">
        <Icon name="shapes" />
      </IconButton>
      <IconButton $w={24} aria-label="Add text style">
        <Icon name="letterA" size={14} />
      </IconButton>
      <IconButton $w={24} aria-label="Add color">
        <Icon name="square" />
      </IconButton>
      <Space $w={43} />
      <StockButton>St</StockButton>
      <IconButton $w={24} $color="#c8c8c8" aria-label="Sync status">
        <Icon name="ccError" />
      </IconButton>
      <IconButton $w={24} aria-label="Delete">
        <Icon name="trash" size={14} />
      </IconButton>
    </LibraryFoot>
  </Panel>
);

const Paragraph = () => (
  <Panel>
    <Tabs>
      <Tab $w={80}>Tracker</Tab>
      <Tab $w={93} $active>
        Paragraph
        <Icon name="menu" size={14} />
      </Tab>
    </Tabs>
    <AlignRow>
      {["alignL", "alignC", "alignR", "justL", "justC", "justR", "justA"].map((name) => (
        <IconButton key={name} $w={25} aria-label={name}>
          <Icon name={name} />
        </IconButton>
      ))}
    </AlignRow>
    <IndentGrid>
      {indents.map(([name, label]) => (
        <Indent key={name}>
          <Icon name={name} />
          <input defaultValue="0 px" aria-label={label} />
        </Indent>
      ))}
    </IndentGrid>
  </Panel>
);

const Timeline = () => (
  <Panel>
    <Tabs>
      <Tab $w={106} $active $pad={1} $menuGap={10}>
        <Close>×</Close>
        <Swatch $color={c.sand} />
        <Space $w={11} />
        Comp 1
        <Icon name="menu" size={14} />
      </Tab>
      <Tab $w={129} $pad={28}>Render Queue</Tab>
    </Tabs>
    <TimelineBody>
      <Layers>
        <LayerTools>
          <Clock>
            <strong>0;00;00;00</strong>
            <span>00000 (29.97 fps)</span>
          </Clock>
          <SearchBox $h={21} $w={227} $pad={4}>
            <Icon name="search" />
            <Caret />
            <input aria-label="Search layers" />
          </SearchBox>
          <ToolIcons>
            {["flowchart", "draft3d", "shyBig", "filmBig", "blur", "graph"].map((name, i) => (
              <IconButton key={name} $w={i < 2 ? 34 : 26} $color="#bdbdbd" aria-label={name}>
                <Icon name={name} />
              </IconButton>
            ))}
          </ToolIcons>
        </LayerTools>
        <LayerTable>
          <colgroup>
            <col width="61" />
            <col width="31" />
            <col width="33" />
            <col width="130" />
            <col width="137" />
            <col />
          </colgroup>
          <thead>
            <tr>
              <th>
                <HeadCell>
                  <Cells $shift={-5}>
                    {["eye", "speaker", "dot", "closedLock"].map((name) => (
                      <Cell key={name} as="span">
                        <Icon name={name} size={13} />
                      </Cell>
                    ))}
                  </Cells>
                </HeadCell>
              </th>
              <th>
                <HeadCell $pad={13}>
                  <Icon name="tag" size={15} />
                </HeadCell>
              </th>
              <th>
                <HeadCell $pad={5}>#</HeadCell>
              </th>
              <th>
                <HeadCell $pad={5}>Source Name</HeadCell>
              </th>
              <th>
                <HeadCell $pad={3}>
                  {["shy", "sun", "quality"].map((name) => (
                    <Cell key={name} as="span">
                      <Icon name={name} size={13} />
                    </Cell>
                  ))}
                  <Cell as="span">
                    <Fx $color="#c2c2c2">fx</Fx>
                  </Cell>
                  {["film", "blur", "half", "cubeLine"].map((name) => (
                    <Cell key={name} as="span">
                      <Icon name={name} size={13} />
                    </Cell>
                  ))}
                </HeadCell>
              </th>
              <th>
                <HeadCell $pad={5} $end={15}>Parent</HeadCell>
              </th>
            </tr>
          </thead>
          <tbody>
            <tr>
              <td>
                <Cells $shift={-5}>
                  <Cell $box aria-label="Video">
                    <Icon name="eye" size={13} />
                  </Cell>
                  <Cell aria-label="Audio" />
                  <Cell $box aria-label="Solo" />
                  <Cell $box aria-label="Lock" />
                </Cells>
              </td>
              <td>
                <Cells $shift={4}>
                  <Twirl aria-label="Expand layer">
                    <Triangle />
                  </Twirl>
                  <Space $w={4} />
                  <Swatch $size={12} $color={c.red} />
                </Cells>
              </td>
              <td>
                <Cells $shift={6}>
                  <b>1</b>
                </Cells>
              </td>
              <td>
                <Cells $shift={2}>
                  <Swatch $size={14} $color="#000" />
                  <LayerName>Black Solid 1</LayerName>
                </Cells>
              </td>
              <td>
                <Cells $shift={3}>
                  <Cell $box aria-label="Shy">
                    <Icon name="shy" size={13} />
                  </Cell>
                  <Cell $box aria-label="Collapse" />
                  <Cell $box aria-label="Quality">
                    <Icon name="slash" size={13} />
                  </Cell>
                  <Cell $box aria-label="Effects">
                    <Fx $color="#c2c2c2">fx</Fx>
                  </Cell>
                  <Cell aria-label="Frame blend" />
                  <Cell $box aria-label="Motion blur" />
                  <Cell $box aria-label="Adjustment" />
                  <Cell $box aria-label="3D" />
                </Cells>
              </td>
              <td>
                <Cells $shift={2}>
                  <Cell aria-label="Pick whip">
                    <Icon name="whip" size={13} />
                  </Cell>
                  <Space $w={5} />
                  <Select label="Parent" options={["None"]} $w={91} $h={16} $color="#c4c4c4" arrow="#ccc" />
                </Cells>
              </td>
            </tr>
          </tbody>
        </LayerTable>
      </Layers>
      <TimeArea>
        <RangeBar $h={11} $top={4}>
          <Grip aria-label="Navigator start" />
          <Grip $end aria-label="Navigator end" />
        </RangeBar>
        <Ruler>
          {seconds.map((s, i) => (
            <Tick key={s}>{i === 0 ? "0:00s" : s}</Tick>
          ))}
        </Ruler>
        <RangeBar $h={17}>
          <Grip aria-label="Work area start" />
          <Grip $end aria-label="Work area end" />
        </RangeBar>
        <Track>
          <LayerBar />
        </Track>
        <Playhead>
          <svg width="12" height="14" viewBox="0 0 12 14" fill={c.cyan} aria-hidden="true">
            <path d="M0 0h12v7l-6 6-6-6z" />
            <path d="M3.500 2v3M6 2v3M8.500 2v3" stroke="#0c4a66" />
          </svg>
        </Playhead>
      </TimeArea>
      <Gutter>
        <Icon name="marker" size={14} />
        <Icon name="compBtn" size={14} />
      </Gutter>
    </TimelineBody>
  </Panel>
);

const ErrorDialog = ({ onClose }) => (
  <Dialog role="alertdialog" aria-labelledby="dialog-title">
    <DialogTitle id="dialog-title">After Effects</DialogTitle>
    <DialogBody>
      <svg width="26" height="26" viewBox="0 0 26 26" aria-hidden="true">
        <path d="M8 .500h10l7.500 7.500v10L18 25.500H8L.500 18V8z" fill="#cf4038" stroke="#a32a24" />
        <path d="M8 8l10 10M18 8L8 18" stroke="#7c1f1b" strokeWidth="6" strokeLinecap="round" />
        <path d="M8 8l10 10M18 8L8 18" stroke="#dcd6d6" strokeWidth="4" strokeLinecap="round" />
      </svg>
      <p>
        {"After Effects error: file ‘Cloud Sequence.mov’ cannot be imported — this ‘.mov’\nfile is damaged or unsupported."}
      </p>
      <OkButton onClick={onClose}>OK</OkButton>
    </DialogBody>
  </Dialog>
);

const App = () => {
  const [open, setOpen] = useState(true);

  return (
    <>
      <GlobalStyle />
      <Page>
        <MenuBar>
          {menus.map((name) => (
            <button key={name}>{name}</button>
          ))}
        </MenuBar>
        <Tools />
        <Work>
          <Upper>
            <EffectControls />
            <Composition />
          </Upper>
          <Side>
            <Info />
            <Preview />
            <Libraries />
          </Side>
          <Timeline />
          <Paragraph />
        </Work>
      </Page>
      {open && <ErrorDialog onClose={() => setOpen(false)} />}
    </>
  );
};

export default App;
